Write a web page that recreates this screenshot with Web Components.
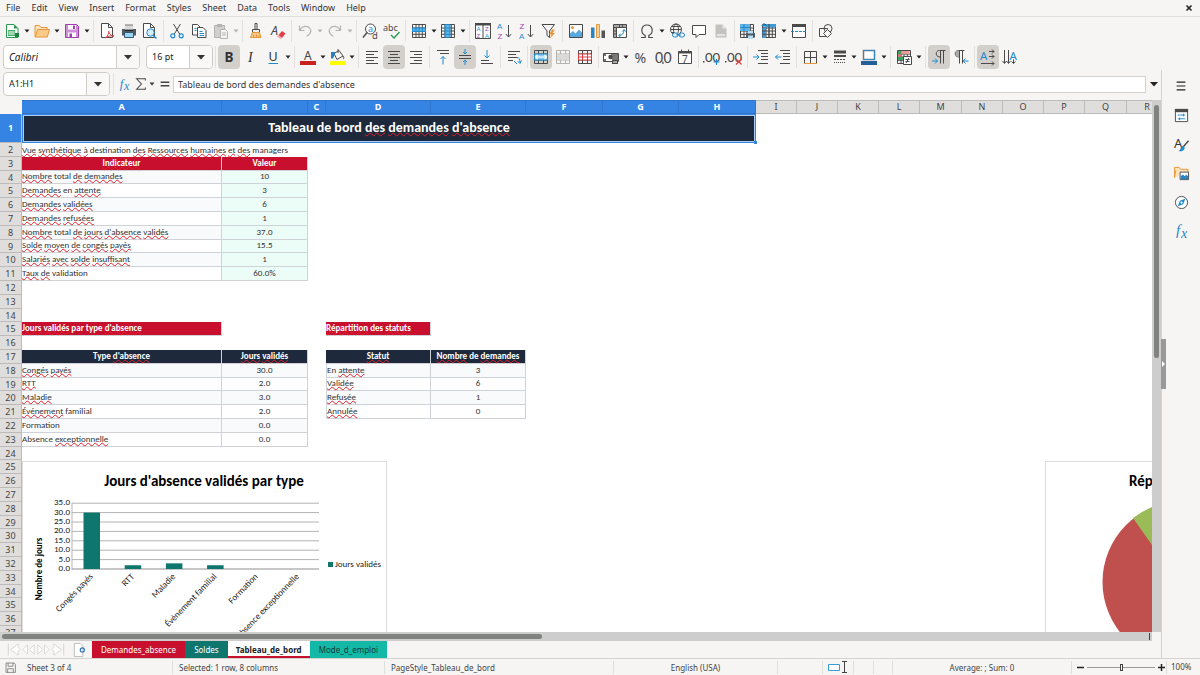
<!DOCTYPE html>
<html lang="fr">
<head>
<meta charset="utf-8">
<title>Tableau de bord des demandes d'absence</title>
<style>
html,body{height:100%}
body{margin:0;background:#f6f5f4;color:#3a3a3a;font-family:"Noto Sans","DejaVu Sans",sans-serif;font-size:9px;line-height:12px;
--ui:#f6f5f4;--line:#d8d6d3;--blue:#3584e4;--red:#c8102e;--navy:#1e293b;--teal:#0f766e;--sheet-font:Carlito,Lato,sans-serif}
</style>
</head>
<body>
<calc-app></calc-app>
<script>
const define=(name,html,setup)=>{
  const t=document.createElement('template');t.innerHTML=html;
  customElements.define(name,class extends HTMLElement{
    constructor(){super();this.attachShadow({mode:'open'}).append(t.content.cloneNode(true));}
    connectedCallback(){if(setup&&!this.ready){this.ready=true;setup(this,this.shadowRoot);}}
  });
};
const K='#4a4a4a',B='#1e8bcd',G='#b5b3b0',P='#a33eb0',O='#e8963a',R='#dc3f3f';
const p=(d,c=K,w=1,f='none')=>`<path d="${d}" stroke="${c}" stroke-width="${w}" fill="${f}"/>`;
const f=(d,c)=>`<path d="${d}" fill="${c}"/>`;
const tx=(x,y,s,c,t,extra='')=>`<text x="${x}" y="${y}" font-size="${s}" fill="${c}" ${extra}>${t}</text>`;
const LS='font-family="Liberation Sans"',CA='font-family="Carlito, Lato"';
const grid=(c)=>p('M1.5 1.5h13v13h-13zM1.5 5h13M1.5 8h13M1.5 11.300h13M5 1.500v13M8 1.500v13M11.300 1.500v13',c);
const lines=(a,c=K)=>p(a.map(([x,y,w])=>`M${x} ${y}h${w}`).join(''),c);
const mgrid=c=>p('M1.5 1.5h13v13h-13zM1.5 5h13M1.500 11h13M5.500 1.500V5M10.500 1.500V5M5.500 11v3.500M10.500 11v3.500M1.500 8h13',c);
const ICONS={
new:p('M2.500 1.500h7.500l4 4v9h-11.500z','#2d9a52',1,'#fff')+f('M10 1.500v4h4z','#2d9a52')+f('M4 7h7v6H4z','#46b06a')+p('M4.500 9h6M4.500 11h6','#fff')+f('M11 10h4v4h-4z','#1c8040'),
open:p('M1 14V2.500h4.500l1.500 2h6V7',O,1,'#fbe3bd')+p('M1.200 14 3.500 6.500H15.500L13.300 14z',O,1,'#fbc988'),
save:p('M1.500 1.500h11l2 2v11h-13z',P,1,'#cf8fd8')+f('M4 2h8v4.500H4zM4 9.500h8V14H4z','#fff')+f('M9 2.500h2V6H9zM5.500 10.500H8V14H5.500z',P),
pdf:p('M2.500 .500h7l4 4v10h-11z',K,1,'#fff')+p('M9.500 .500v4h4')+p('M6.500 15C9 12.500 10 10 9.700 8.200C10.300 11 12 13 15 13C12 12.500 9 13 6.500 15z',R,1,'#fff'),
print:f('M4 1.500h8v4H4z','#777')+f('M1 6h14v6.500H1z','#4f5a63')+f('M4 2.500h8v4H4z','#d9d9d9')+p('M3.500 9.500h9v5h-9z','#38576d',1,'#9bd3f4')+p('M4 7.500h8','#222'),
preview:p('M1.500 .500h7l4 4v10h-11z',K,1,'#fff')+p('M8.500 .500v4h4')+`<circle cx="8.500" cy="9.500" r="3.700" fill="#d3edfb" stroke="${B}"/>`+p('M11 12.300 14.500 15.500',B,1.500),
cut:p('M4.500 1 10.800 11.200M11.500 1 5.200 11.200')+`<circle cx="3.800" cy="12.800" r="2" fill="none" stroke="${B}" stroke-width="1.200"/><circle cx="12.200" cy="12.800" r="2" fill="none" stroke="${B}" stroke-width="1.200"/>`,
copy:p('M1.500 1.500h5l2.500 2.500v8h-7.500z',K,1,'#fff')+p('M6.500 4.500h5.500l3 3v7h-8.500z',K,1,'#fff')+p('M8.500 8.500h3M8.500 10.500h4.500M8.500 12.500h4.500M3.500 5.500h2M3.500 7.500h2',B),
paste:f('M1.500 2.500h10v12h-10z','#d2d0cd')+p('M1.500 2.500h10v12h-10z',G)+f('M4 1h5v3H4z',G)+p('M7.500 6.500h5l2 2v7h-7z',G,1,'#f6f5f4')+p('M9 10h4M9 12h4',G),
brush:p('M7 .500h2v6H7z')+p('M4.500 6.500h7v3h-7z',K,1,'#eee')+p('M4.500 9.500h7l1.500 5H2.500z',O,1,'#fbc988')+p('M5.500 14v-2.500M8.500 14v-2.500M11 14v-2',O),
clear:tx(1,12,12.5,K,'A','font-style="italic"')+f('M8.500 12 12 8 15.500 10.500 12 15z','#dc3f4a')+f('M7 13.500 8.500 12l3.500 3-1.500 1z','#f3a3a8'),
undo:p('M2.500 2.500v5h5M3 7C5 3 10.500 2 13 5.500C14.500 8 13.500 11 9.500 13.500',G,1.2),
redo:p('M13.500 2.500v5h-5M13 7C11 3 5.500 2 3 5.500C1.500 8 2.500 11 6.500 13.500',G,1.2),
find:`<circle cx="8.500" cy="6" r="5" fill="#fff" stroke="${K}"/>`+tx(6,9,9,B,'a')+p('M5 9.500 1 14.500',K,1.400)+tx(10,15.5,9.5,K,'d'),
spell:tx(-1,8,9,K,'abc')+p('M7 12 10 15 15.500 9','#2d9a52',1.400),
row:grid(K)+f('M1 5h14v4H1z','#5fb2e6')+p('M1.500 5h13v3.500h-13zM5 5v3.500M8 5v3.500M11.300 5v3.500',B),
col:grid(K)+f('M5 1h5v14H5z','#5fb2e6')+p('M5 1.500h5v13h-5zM5 5h5M5 8h5M5 11.300h5',B),
sort:p('M.500 .500h15v15h-15zM8 1v14',K,1,'#fff')+f('M0 0h16v2.500H0z',K)+tx(1.5,8,6,B,'A',LS)+tx(1.5,14.8,6,P,'Z',LS)+tx(10,8,6,P,'Z',LS)+tx(10,14.8,6,B,'A',LS),
asc:tx(0,6,8,B,'A',LS)+tx(.5,15.5,8,P,'Z',LS)+p('M11.500 2v12M8.800 11l2.700 3 2.700-3'),
desc:tx(.5,6,8,P,'Z',LS)+tx(0,15.5,8,B,'A',LS)+p('M11.500 2v12M8.800 11l2.700 3 2.700-3'),
filter:p('M1 1.500h12.500L8.500 8v6.500L6 12.500V8z')+f('M11 6.500 8 11.500h2.500L8.500 16l5.500-6h-2.500L14 6.500z',O),
image:p('M1.500 1.500h13v13h-13z',K,1,'#fff')+f('M2 14v-3.500L5 8l2.500 2.500L11 6.500l3 3V14z','#5aa9dc')+`<circle cx="4.500" cy="4.500" r="1.500" fill="${O}"/>`,
chart:f('M1 4.500h3.500V15H1z','#2a86c2')+p('M6.500 1.500h3v13h-3z',O,1,'#fbd29c')+f('M11.500 7.500H15V15h-3.500z','#555'),
pivot:p('M1.500 1.500h13v13h-13z',K,1,'#fff')+f('M2 2h12v2.500H2zM2 4h2.500v10H2z','#aaa')+p('M4.500 4.500V14M2 4.500h12M7.500 2v2.500M10.500 2v2.500M2 8h2.500M2 11h2.500')+p('M7 12.500C10 12.500 12 10.500 12 7M10.300 8.500 12 6.500l1.500 2M8.500 10.800 6.800 12.500l1.700 1.500',B),
omega:p('M2 14.500h4.200v-2C1 10 2 2 8 2s7 8 1.800 10.500v2H14',K,1.200),
link:`<circle cx="7" cy="6.500" r="5.500" fill="none" stroke="${K}"/><ellipse cx="7" cy="6.500" rx="2.500" ry="5.500" fill="none" stroke="${K}"/>`+p('M1.500 6.500h11M2.500 3.500h9M2.500 9.500h3')+`<rect x="3.500" y="10" width="5.500" height="4" rx="2" fill="#f6f5f4" stroke="${B}"/><rect x="10" y="10" width="5.500" height="4" rx="2" fill="#f6f5f4" stroke="${B}"/>`+p('M7 12h5',B),
comment:p('M1.500 2.500h13v9H8l-3 3v-3H1.500z',K,1,'#fff'),
footer:f('M2.500 1.500h7l4 4v9h-11z','#c4c2bf')+f('M9.500 1.500v4h4z','#e6e5e3')+f('M4 11h8v2H4z','#e6e5e3'),
parea:grid(K)+f('M1 1h10v7H1z','#5fb2e6')+p('M1.500 4.500h9.500M5 1v7',B)+f('M7 10h9v4.500H7z','#4f5a63')+f('M9 8h5v2.500H9zM9 12.500h5V16H9z','#b9def2'),
freeze:grid(K)+f('M5 1h10v3.500H5zM1.500 5H5v10H1.500z','#3f9bd8')+p('M8 1v14M5 8h-4M5 11.300h-4',K)+p('M3 0v5M.500 2.500h5',B,1.200),
split:p('M1.500 1.500h13v13h-13z',K,1,'#fff')+f('M1 1h14v3H1z',K)+p('M0 8.500h16',B,1,'none').replace('/>',' stroke-dasharray="3 1"/>'),
shapes:p('M1.500 5.500h8v8h-8z')+`<circle cx="10" cy="5.500" r="4" fill="none" stroke="${K}"/>`+p('M9.500 6.500l4 4-4 4-4-4z',K,1,'#f6f5f4'),
bold:tx(3.5,13,13.5,'#333','B','font-weight="700"'),
italic:tx(5,13,14,'#333','I','font-family="Liberation Serif" font-style="italic"'),
underline:tx(3.5,12,12.5,'#333','U')+p('M3.500 14.500h9.500',B),
fontcol:tx(4,10.5,12,'#444','A')+f('M0 12h16v4H0z','#c9211e'),
hilite:p('M4 4.500 9 1.500l4 5.500-6 3.500zM8 0v4')+f('M1 3h4v2L3 9.500H1z','#2a7fc0')+p('M13 7c1.500 2 .500 3 0 3')+f('M0 12h16v4H0z','#ffff00'),
left:lines([[2,2.500,12],[2,5.500,8],[2,8.500,12],[2,11.500,8],[2,14.500,12]]),
center:lines([[2,2.500,12],[4,5.500,8],[2,8.500,12],[4,11.500,8],[2,14.500,12]]),
right:lines([[2,2.500,12],[6,5.500,8],[2,8.500,12],[6,11.500,8],[2,14.500,12]]),
top:lines([[2,1.500,12],[5,4.500,9]])+p('M8 15.500V7.500M5.500 10 8 7.500l2.500 2.500',B),
middle:lines([[2,6.500,12],[2,9.500,12]])+p('M8 0v5M6 3l2 2 2-2M8 16v-5M6 13l2-2 2 2',B),
bottom:lines([[2,11.500,8],[2,14.500,12]])+p('M8 1v8M5.500 6.500 8 9l2.500-2.500',B),
wrap:lines([[2,2.500,12],[2,5.500,8],[2,8.500,9],[2,11.500,5]])+p('M11 8.500c2 0 3 1.500 3 5M11.500 12l2.500 2.500 1.500-3M8 12l3 3',B),
merge:mgrid(K)+f('M1 5h14v6H1z','#8fccf0')+p('M1.500 5h13v6h-13z',B)+p('M2.500 8h11M4.500 6 2.500 8l2 2M11.500 6l2 2-2 2','#fff',1.2),
mergeoff:mgrid(G)+f('M2 5.500h12v5H2z','#dcdad7'),
unmerge:mgrid(K)+f('M1 5h14v6H1z','#fff')+p('M1.500 5h13v6h-13zM5.500 5v6M10.500 5v6M1.500 8h13',R),
money:p('M.500 4.500h15v8H.500z',K,1,'#fff')+f('M8 5h7v7H9zM1 5h2v2H1zM1 10h2v2H1z','#777')+`<circle cx="7.500" cy="8" r="2.200" fill="${K}"/>`+f('M9 11h6v4H9z',K)+p('M10 13h4','#fff'),
percent:tx(1.5,13.5,14,K,'%'),
num:tx(0,14,16,K,'0',CA)+tx(8.5,14,16,K,'0',CA)+f('M7.300 12.500h1.200v2.500H7.300z',K),
date:p('M1.500 2.500h13v12h-13z',K,1,'#fff')+p('M1.500 3.500h13',K,2)+p('M4.500 .500v3M11.500 .500v3')+tx(5,13.5,10,K,'7'),
decadd:tx(1,13,15,K,'00',CA)+f('M-1 12h1.500v1.500H-1z',K)+p('M12.500 10v6M9.500 13h6',B,1.200),
decdel:tx(1,13,15,K,'00',CA)+f('M-1 12h1.500v1.500H-1z',K)+p('M10 10l5.500 5.500M15.500 10 10 15.500',R,1.200),
indent:lines([[5,1.500,10],[8,4.500,7],[8,7.500,7],[8,10.500,7],[5,14.500,10]])+p('M0 8h6M3.500 5.500 6 8l-2.500 2.500',B),
outdent:lines([[5,1.500,10],[8,4.500,7],[8,7.500,7],[8,10.500,7],[5,14.500,10]])+p('M6.500 8h-6M3 5.500.500 8 3 10.500',B),
border:p('M2.500 2.500h12v12h-12zM8.500 2.500v12M2.500 8.500h12')+p('M2 14.500h13',O),
lstyle:p('M2 3h12',K,3)+p('M2 7h12',K,2)+p('M2 10.500h12',K).replace('/>',' stroke-dasharray="2 1"/>')+p('M2 13.500h12',K).replace('/>',' stroke-dasharray="1 1"/>'),
lcolor:p('M2.500 1.500h11v9h-11z','#7a7a7a',1.500,'#fff')+p('M2.500 1.500h11v9h-11z',B,.8)+f('M0 12h16v4H0z','#22609c'),
cond:grid(K)+f('M2 2h3v3H2zM2 8h5v3H2z','#3aa15f')+f('M5.500 2h8v3h-8z','#f09a95')+f('M2 5.500h4v2H2z','#e86a62')+p('M7.500 7.500h8v8h-8z',K,1,'#fff')+p('M9.500 10.500h4M9.500 12.500h4M13 9l-3 5'),
ltr:p('M9.500 14.500V1.500M12.500 14.500V1.500M14.500 1.500H8.500C4 1.500 4 8 9 8')+p('M1 12h5.500M4 9.500 6.500 12 4 14.500',B),
rtl:p('M6.500 14.500V1.500M9.500 14.500V1.500M11.500 1.500H5.500C1 1.500 1 8 6 8',K,1)+f('M6 1.500C1.500 1.500 1.500 8 6 8z','#aaa')+p('M15.500 12H10M12.500 9.500 10 12l2.500 2.500',B),
lrdir:tx(0,10.5,11.5,B,'A')+p('M9 2.500h5M12 .500l2 2-2 2M9 7.500h5M12 5.500l2 2-2 2M1 14.500h13M12 12.500l2 2-2 2'),
tbdir:tx(7.5,10.5,11.5,B,'A')+p('M2.500 1v13M.500 12l2 2.500 2-2.500M6.500 1v13M4.500 12l2 2.500 2-2.500M11.500 10.500v4M9.500 12.500l2 2 2-2'),
menu:p('M3 3.500h10M3 8h10M3 12.500h10','#222',1.4),
props:p('M1.500 1.500h13v13h-13z',K,1,'#fff')+f('M1 1h14v3.500H1z',K)+p('M4 7.500h8M4 11.500h8M10 6v3M6 10v3',B),
styles:tx(0,11.5,14,'#333','A')+p('M15.500 4 9.500 11',K,1.5)+f('M9.800 9.500c-3 0-2 4-5 5.500 4 1 7-1 6.500-4z',B),
gallery:p('M.500 12.500v-11h5l1.500 2h8v3',O,1,'#fbe3bd')+p('M.500 12.500 2 4.500',O)+p('M6.500 6.500h9v8h-9z',K,1,'#fff')+f('M7 14v-3l2.500-2 2 2 1.500-2 2 2v3z','#2a86c2'),
navi:`<circle cx="8" cy="8" r="6.500" fill="#fff" stroke="${K}"/>`+f('M12 4 9.800 9.800 4 12 6.200 6.200z',B)+`<circle cx="8" cy="8" r="1.200" fill="#fff"/>`,
fx:tx(2,12,16,B,'f','font-family="Liberation Serif" font-style="italic"')+tx(7.5,14.5,15,B,'x','font-family="Liberation Serif" font-style="italic"'),
sigma:p('M13 4V2H3l5.500 6L3 14h10v-2',K,1.2),
equal:p('M3 6h10M3 10h10','#444',1.8),
floppy:p('M2.500 2.500h10l1.500 1.500v10H2.500z','#777')+p('M5 2.500v4h6v-4M4.500 14V9.500h7V14','#777'),
addsheet:p('M2.500 1.500h6l3 3v11h-9z','#bbb',1,'#fff')+`<circle cx="11" cy="8.500" r="2.200" fill="none" stroke="#2a6fc0" stroke-width="1.200"/>`
};
const svg=(n,s=16)=>`<svg viewBox="0 0 16 16" width="${s}" height="${s}" aria-hidden="true" overflow="visible" font-family="Noto Sans, sans-serif">${ICONS[n]||''}</svg>`;
const CARET='<svg viewBox="0 0 8 8" width="8" height="8" aria-hidden="true"><path d="M1.500 2.500h5L4 5.500z" fill="currentColor"/></svg>';
const BTN='button{border:0;background:none;padding:0;margin:0;font:inherit;color:inherit;display:flex;align-items:center;justify-content:center;min-width:0}';

define('tool-button',`<style>${BTN}
:host{display:flex;flex:0 1 22px;min-width:0;height:24px;color:#222}
:host([drop]){flex-basis:30px}
:host([off]){color:#b5b3b0}
.main{flex:1;border-radius:4px}
:host([active]) .main{background:#d3d0cc}
.drop{width:8px;overflow:visible}
svg{flex:none}
</style>`,(el,r)=>{
  const n=el.getAttribute('icon'),l=el.getAttribute('label'),d=el.hasAttribute('off')?' disabled':'';
  r.innerHTML+=`<button class="main" aria-label="${l}"${d}>${svg(n)}</button>`+(el.hasAttribute('drop')?`<button class="drop" aria-label="${l}, options"${d}>${CARET}</button>`:'');
});
define('tool-sep',`<style>:host{display:block;flex:none;width:1px;height:22px;margin:0 2px;background:#e3e1de}</style>`);
define('tool-bar',`<style>:host{display:flex;align-items:center;height:27px;padding-left:1px}</style><slot></slot>`);
define('combo-box',`<style>${BTN}
:host{display:flex;box-sizing:border-box;flex:none;height:24px;border:1px solid #cfccc8;border-radius:4px;background:#fff;overflow:hidden}
input{flex:1;min-width:0;border:0;background:none;padding:0 0 0 5px;font:inherit;color:#222;outline:0}
:host([slanted]) input{font-size:10px;font-style:italic}
button{width:23px;border-left:1px solid #cfccc8;background:#f9f8f7}
</style>`,(el,r)=>{
  const l=el.getAttribute('label');
  r.innerHTML+=`<input aria-label="${l}" value="${el.getAttribute('value')}"><button aria-label="${l}, liste"><svg width="8" height="5" viewBox="0 0 8 5" aria-hidden="true"><path d="M0 0h8L4 4.500z" fill="#333"/></svg></button>`;
});
define('menu-bar',`<style>${BTN}
:host{display:flex;align-items:center;height:16px;border-bottom:1px solid #e2e0dd}
nav{display:flex;gap:11px;padding-left:6px;flex:1}
button{color:#333}
.close{padding-right:7px}
</style><nav aria-label="Menu"></nav><button class="close" aria-label="Fermer"><svg width="8" height="8" viewBox="0 0 8 8"><path d="M1.500 1.500l5 5M6.500 1.500l-5 5" stroke="#222" stroke-width="1.600"/></svg></button>`,
(el,r)=>{r.querySelector('nav').innerHTML='File Edit View Insert Format Styles Sheet Data Tools Window Help'.split(' ').map(m=>`<button>${m}</button>`).join('');});

define('formula-bar',`<style>${BTN}
:host{display:flex;align-items:center;box-sizing:border-box;height:30px;padding:0 0 2px 3px}
combo-box{width:107px}
tool-sep{margin:0 1px 0 3px}
.b{width:19px}.s{width:13px}.d{width:9px}.e{width:17px}
input{flex:1;min-width:0;height:17px;box-sizing:border-box;border:1px solid #d3d1ce;background:#fff;padding:0 4px;font:inherit;color:#333;outline:0}
.x{width:15px;height:20px}
</style><combo-box label="Zone de nom" value="A1:H1"></combo-box><tool-sep></tool-sep>
<button class="b" aria-label="Assistant fonctions">${svg('fx',13)}</button><button class="s" aria-label="Somme">${svg('sigma',14)}</button><button class="d" aria-label="Somme, options">${CARET}</button><button class="e" aria-label="Formule">${svg('equal',14)}</button>
<input aria-label="Contenu de la cellule" value="Tableau de bord des demandes d'absence">
<button class="x" aria-label="Agrandir"><svg width="8" height="5" viewBox="0 0 8 5"><path d="M0 0h8L4 4.500z" fill="#222"/></svg></button>`);

define('bar-chart',`<style>
:host{display:block;box-sizing:border-box;background:#fff;border:1px solid #dedede;overflow:hidden}
svg{display:block;font-family:var(--sheet-font);font-size:9px;fill:#222}
</style>`,(el,r)=>{
  let s='';
  for(let i=0;i<8;i++){const y=107-i*9.4;s+=`<path d="M50 ${y}H297" stroke="${i?'#b3b3b3':'#8f8f8f'}"/><text x="48" y="${y+2}" text-anchor="end">${(i*5).toFixed(1)}</text>`;}
  s+='<path d="M50 41v67" stroke="#b3b3b3"/>';
  [['Congés payés',30],['RTT',2],['Maladie',3],['Événement familial',2],['Formation',0],['Absence exceptionnelle',0]].forEach(([t,v],i)=>{
    const x=61.5+i*41.2,h=v*1.88;
    if(v)s+=`<rect x="${x}" y="${107-h}" width="16.500" height="${h}" fill="#0f766e"/>`;
    s+=`<text transform="translate(${x+10} 115) rotate(-46)" text-anchor="end">${t}</text>`;
  });
  r.innerHTML+=`<svg viewBox="1 0 363 220" width="363" height="220" role="img" aria-label="Jours d'absence validés par type"><text x="182" y="24" font-size="15" font-weight="700" text-anchor="middle" fill="#000">Jours d'absence validés par type</text>${s}<text transform="translate(20 107) rotate(-90)" text-anchor="middle" font-weight="700" fill="#000">Nombre de jours</text><rect x="306" y="100" width="5" height="5" fill="#0f766e"/><text x="313" y="105">Jours validés</text></svg>`;
});
define('pie-chart',`<style>
:host{display:block;box-sizing:border-box;background:#fff;border:1px solid #dedede}
svg{display:block;font-family:var(--sheet-font)}
</style><svg viewBox="1 0 363 220" width="363" height="220" role="img" aria-label="Répartition des statuts"><text x="84" y="24" font-size="15" font-weight="700">Répartition des statuts</text>
<circle cx="138" cy="120" r="80.500" fill="#c0504d"/><path d="M88 56A80.500 80.500 0 0 1 138 39.500L135 123z" fill="#9bbb59"/></svg>`);

const mark=t=>t.replace(/~([^~]+)~/g,'<span class="sp">$1</span>');
define('sheet-grid',`<style>
:host{display:block;position:relative;overflow:hidden;background:#fff;flex:1;min-width:0}
table{table-layout:fixed;width:0;border-collapse:separate;border-spacing:0;font-family:var(--sheet-font);font-size:9px;line-height:12px;color:#333}
th,td{box-sizing:border-box;height:14px;padding:0;white-space:nowrap;text-align:left;font-weight:400;overflow:visible}
tbody td{line-height:11px;padding-bottom:2px}
thead th{background:#dfdedd;border:solid #bdbbb9;border-width:1px 1px 1px 0;text-align:center;font-family:"Noto Sans",sans-serif;color:#444}
thead th.on{background:var(--blue);color:#fff;font-weight:700;border-color:#2f76cc}
thead td{background:#f6f5f4}
tbody th{background:#dfdedd;border:solid #bdbbb9;border-width:0 1px 1px 0;text-align:center;font-family:"Noto Sans",sans-serif;color:#444}
tbody tr:nth-child(5n+4)>*{height:13px;line-height:11px}
tbody tr:nth-child(5n+4)>td{line-height:10px}
tbody tr:first-child>*{height:29px}
tbody th.on{background:var(--blue);color:#fff;font-weight:700}
.title{background:var(--navy);color:#fff;font-size:14px;font-weight:700;text-align:center;border:1px solid var(--blue);box-shadow:inset 0 0 0 1px #a9cdf5}
.sp{text-decoration:underline wavy #e0202a 1px;text-decoration-skip-ink:none;text-underline-offset:0}
.c{text-align:center}
.d{border:solid #cfd3d8;border-width:0 1px 1px 0}
.z{background:#f8fafc}.g{background:#ecfdf8}
.r,.n{color:#fff;font-weight:700;border:solid #cfd3d8;border-width:0 1px 1px 0}
.r{background:var(--red)}.n{background:var(--navy)}
.left{border-left:1px solid #cfd3d8}
.handle{position:absolute;left:754px;top:41px;width:3px;height:3px;background:var(--blue)}
bar-chart,pie-chart{position:absolute;top:361px;width:365px;height:222px}
bar-chart{left:22px}pie-chart{left:1045px}
</style><table><colgroup></colgroup><thead></thead><tbody></tbody></table><span class="handle"></span><bar-chart></bar-chart><pie-chart></pie-chart>`,(el,r)=>{
  const q=s=>r.querySelector(s);
  q('colgroup').innerHTML=[22,200,86,18,105,95,77,76,77,41,41,41,41,42,41,41,41,42,41].map(w=>`<col style="width:${w}px">`).join('');
  q('thead').innerHTML='<tr><td></td>'+[...'ABCDEFGHIJKLMNOPQR'].map((c,i)=>`<th scope="col"${i<8?' class="on"':''}>${c}</th>`).join('')+'</tr>';
  const D={3:[['r c','~Indicateur~'],['r c','Valeur']],15:[['r','~Jours~ ~validés~ par type ~d\'absence~'],0,0,['r','~Répartition~ des ~statuts~']],
    17:[['n c','Type ~d\'absence~'],['n c','~Jours~ ~validés~'],0,['n c','~Statut~'],['n c','~Nombre~ de ~demandes~']],
    2:[['','~Vue~ ~synthétique~ ~à~ destination ~des~ ~Ressources~ ~humaines~ ~et~ ~des~ managers']]};
  [['~Nombre~ total ~de~ ~demandes~','10'],['~Demandes~ en ~attente~','3'],['~Demandes~ ~validées~','6'],['~Demandes~ ~refusées~','1'],['~Nombre~ total ~de~ ~jours~ ~d\'absence~ ~validés~','37.0'],['~Solde~ ~moyen~ ~de~ ~congés~ ~payés~','15.5'],['~Salariés~ ~avec~ ~solde~ ~insuffisant~','1'],['~Taux~ ~de~ validation','60.0%']]
    .forEach(([a,b],i)=>D[4+i]=[['d'+(i%2?'':' z'),a],['d c g',b]]);
  const st=[['En ~attente~','3'],['~Validée~','6'],['~Refusée~','1'],['~Annulée~','0']];
  [['~Congés~ ~payés~','30.0'],['~RTT~','2.0'],['~Maladie~','3.0'],['~Événement~ familial','2.0'],['Formation','0.0'],['Absence ~exceptionnelle~','0.0']]
    .forEach(([a,b],i)=>{const z=i%2?'':' z';D[18+i]=[['d'+z,a],['d c'+z,b],0];if(st[i])D[18+i].push(['d left'+z,st[i][0]],['d c'+z,st[i][1]]);});
  let h='<tr><th scope="row" class="on">1</th><td class="title" colspan="8">Tableau de bord <span class="sp">des</span> <span class="sp">demandes</span> <span class="sp">d\'absence</span></td><td colspan="10"></td></tr>';
  for(let n=2;n<38;n++){
    const c=D[n]||[];
    h+=`<tr><th scope="row">${n}</th>`+c.map(x=>x?`<td class="${x[0]}">${mark(x[1])}</td>`:'<td></td>').join('')+`<td colspan="${18-c.length}"></td></tr>`;
  }
  q('tbody').innerHTML=h;
});
define('scroll-track',`<style>
:host{display:flex;flex:none;background:#cdcdcd}
:host([dir=v]){flex-direction:column;width:9px;padding:5px 0 0}
:host([dir=h]){height:9px;padding:0 2px;align-items:center;justify-content:space-between}
i{background:#80827f;border-radius:3px}
:host([dir=v]) i{width:5px;height:48%;margin-left:2px}
:host([dir=h]) i{height:5px;width:47%}
b{background:#444}
:host([dir=v]) b{display:none}
:host([dir=h]) b{width:1px;height:7px}
</style><i></i><b></b>`);
define('sheet-tabs',`<style>${BTN}
:host{display:flex;height:17px;align-items:stretch;padding-left:6px;font-size:8px}
.nav button{width:15px}.nav{display:flex}
.add{width:26px}
.t{color:#fff;padding:0 9px}
.red{background:var(--red)}.teal{background:var(--teal)}.mint{background:#14b8a6;color:#173b38}
.cur{background:#fff;color:#222;font-weight:700;box-shadow:inset 0 -2px var(--red);padding:0 8px}
</style><div class="nav"></div><button class="add" aria-label="Nouvelle feuille">${svg('addsheet',15)}</button>
<button class="t red">Demandes_absence</button><button class="t teal">Soldes</button><button class="t cur" aria-current="page">Tableau_de_bord</button><button class="t mint">Mode_d_emploi</button>`,(el,r)=>{
  r.querySelector('.nav').innerHTML=[['Première','M2.500 2v12M13 2 5 8l8 6v-4l2-2-2-2z'],['Précédente','M7 3 2 8l5 5zM14 3 9 8l5 5z'],['Suivante','M2 3l5 5-5 5zM9 3l5 5-5 5z'],['Dernière','M13.500 2v12M3 2l8 6-8 6v-4L1 8l2-2z']].map(([l,d])=>`<button aria-label="${l} feuille" disabled><svg viewBox="0 0 16 16" width="15" height="15"><path d="${d}" fill="#fff" stroke="#d6d4d1"/></svg></button>`).join('');
});
define('status-bar',`<style>${BTN}
:host{display:grid;grid-template-columns:21px 152fr 212fr 229fr 164fr 45fr 31fr 20fr 19fr 179fr 95fr 33fr;height:16px;align-items:center;border-top:1px solid #d5d3d0;color:#444;font-size:8px}
:host>*,span{box-sizing:border-box}
.c{min-width:0;height:13px;line-height:13px;border-right:1px solid #e0dedb;padding-left:6px;white-space:nowrap}
.m{text-align:center;padding:0}
.i{display:flex;justify-content:center;align-items:center;padding:0}
.z{display:flex;align-items:center;padding:0 0 0 4px;gap:2px}
.z button{width:9px;height:13px}
input{flex:1;width:20px;min-width:0;appearance:none;-webkit-appearance:none;margin:0;height:13px;background:linear-gradient(#9a9a9a,#9a9a9a) center/100% 1px no-repeat}
input::-webkit-slider-thumb{-webkit-appearance:none;width:3px;height:7px;box-sizing:border-box;border:1px solid #444;background:#f6f5f4}
.p{padding-left:4px}
</style><span class="i">${svg('floppy',13)}</span><span class="c">Sheet 3 of 4</span><span class="c">Selected: 1 row, 8 columns</span><span class="c">PageStyle_Tableau_de_bord</span><span class="c m">English (USA)</span><span class="c"></span>
<span class="c i"><svg width="22" height="12" viewBox="0 0 22 12"><path d="M1.500 3.500h11v6h-11z" fill="#fff" stroke="#3a9bd8"/><path d="M15 .500h5M15 11.500h5M17.500 .500v11" stroke="#444" fill="none"/></svg></span><span class="c"></span><span class="c"></span><span class="c m">Average: ; Sum: 0</span>
<span class="c z"><button aria-label="Zoom arrière"><svg width="7" height="7" viewBox="0 0 7 7"><path d="M0 3.500h7" stroke="#222" stroke-width="1.500"/></svg></button><input type="range" min="0" max="100" value="50" aria-label="Zoom"><button aria-label="Zoom avant"><svg width="7" height="7" viewBox="0 0 7 7"><path d="M0 3.500h7M3.500 0v7" stroke="#222" stroke-width="1.500"/></svg></button></span><span class="p">100%</span>`);
define('side-bar',`<style>${BTN}
:host{display:flex;flex-direction:column;align-items:center;position:relative;flex:none;border-left:1px solid #d5d3d0;box-sizing:border-box;width:39px;padding-top:1px}
button{width:28px;height:29px}
button:nth-of-type(2){margin-top:1px}
.grip{position:absolute;left:-1px;top:269px;width:5px;height:50px;background:#999}
</style><span class="grip"><svg width="5" height="50" viewBox="0 0 5 50"><path d="M1 22l3 3-3 3z" fill="#fff"/></svg></span>`,(el,r)=>{
  r.innerHTML+=[['menu','Paramètres'],['props','Propriétés'],['styles','Styles'],['gallery','Galerie'],['navi','Navigateur'],['fx','Fonctions']].map(([i,l])=>`<button aria-label="${l}">${svg(i,i=='menu'?14:15)}</button>`).join('');
});
const bar=s=>s.trim().split(/\s+/).map(t=>{
  if(t==='|')return '<tool-sep></tool-sep>';
  const n=t.replace(/[+*-]/g,'');
  return `<tool-button icon="${n}" label="${n}"${t.includes('+')?' drop':''}${t.includes('*')?' active':''}${t.includes('-')?' off':''}></tool-button>`;
}).join('');
define('calc-app',`<style>
:host{display:flex;flex-direction:column;height:100vh;overflow:hidden}
.std{max-width:836px}
.fmt{height:26px;padding-left:3px;max-width:1018px}
.font{width:137px;margin-right:6px}
.size{width:67px}
.work{display:flex;flex:1;min-height:0}
.doc{display:flex;flex-direction:column;flex:1;min-width:0}
.view{display:flex;flex:1;min-height:0}
.h{margin-right:9px}
</style><menu-bar></menu-bar>
<tool-bar class="std">${bar('new+ open+ save+ | pdf print preview | cut copy paste+- | brush clear | undo+- redo+- | find spell | row+ col+ | sort asc desc filter | image chart pivot | omega+ link comment footer- | parea freeze+ split | shapes')}</tool-bar>
<tool-bar class="fmt"><combo-box class="font" slanted label="Police" value="Calibri"></combo-box><combo-box class="size" label="Taille" value="16 pt"></combo-box><tool-sep></tool-sep>${bar('bold* italic underline+ | fontcol+ hilite+ | left center* right | top middle* bottom | wrap | merge* mergeoff- unmerge | money+ percent num date | decadd decdel | indent outdent | border+ lstyle+ lcolor+ | cond+ | ltr* rtl | lrdir* tbdir')}</tool-bar>
<div class="work"><div class="doc"><formula-bar></formula-bar><div class="view"><sheet-grid></sheet-grid><scroll-track dir="v"></scroll-track></div><scroll-track class="h" dir="h"></scroll-track><sheet-tabs></sheet-tabs></div><side-bar></side-bar></div>
<status-bar></status-bar>`);
</script>
</body>
</html>
